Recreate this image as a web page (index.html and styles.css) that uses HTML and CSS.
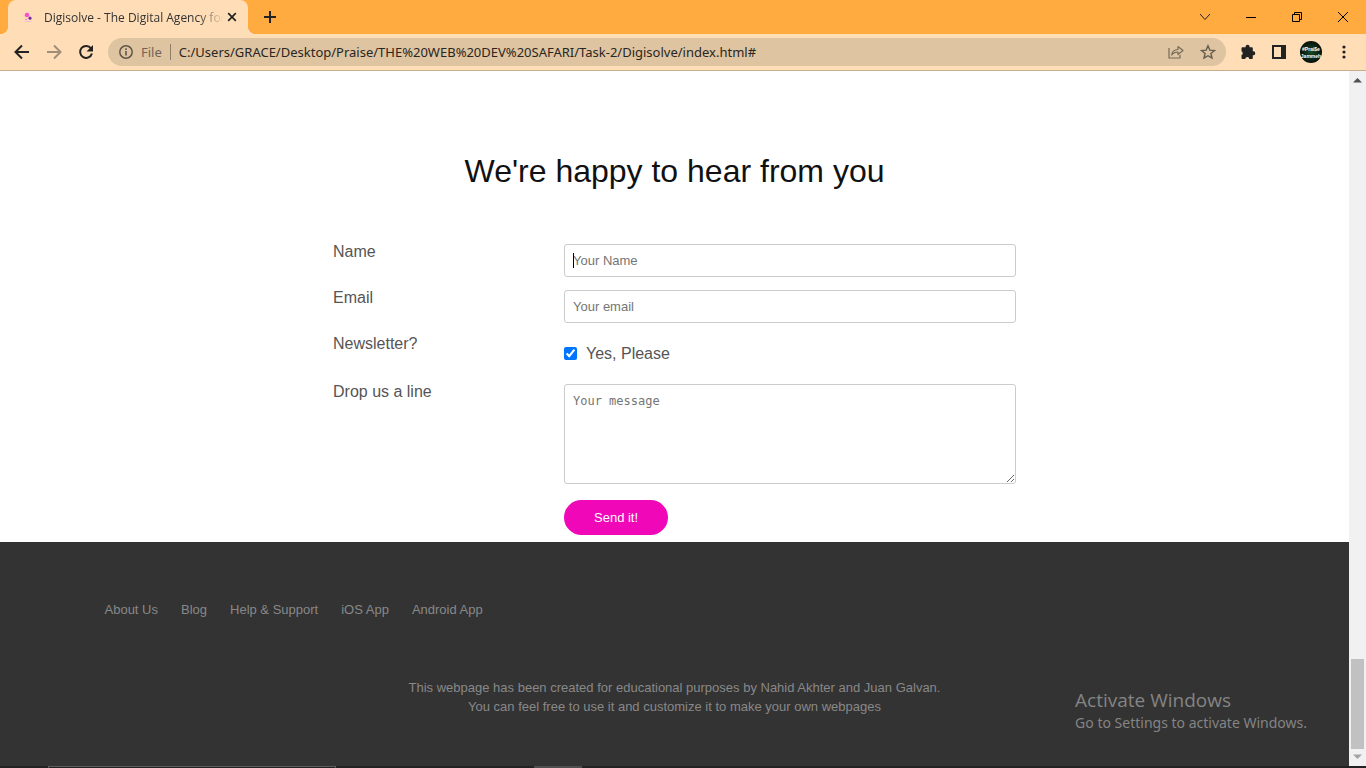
FILE: index.html
```html
<!DOCTYPE html>
<html lang="en">
<head>
<meta charset="utf-8">
<meta name="viewport" content="width=device-width, initial-scale=1">
<title>Digisolve - The Digital Agency for</title>
<link rel="stylesheet" href="styles.css">
</head>
<body>
<div class="browser">
  <header class="tab-strip">
    <div class="tab">
      <svg class="favicon" width="16" height="16" viewBox="0 0 16 16" aria-hidden="true">
        <circle cx="7" cy="6" r="2.3" fill="#ff4fd0"/><circle cx="10" cy="9.2" r="1.6" fill="#7b2f9c"/><path d="M5 10.500h2" stroke="#d58be0"/><path d="M4.500 12.500h7" stroke="#f0bfd4"/>
      </svg>
      <span class="tab-title">Digisolve - The Digital Agency for</span>
      <button class="icon-button tab-close" type="button" aria-label="Close tab">
        <svg width="10" height="10" viewBox="0 0 10 10"><path d="M1.200 1.200l7.600 7.600M8.800 1.200L1.200 8.800" stroke="#222" stroke-width="1.700"/></svg>
      </button>
    </div>
    <button class="icon-button new-tab" type="button" aria-label="New tab">
      <svg width="12" height="12" viewBox="0 0 12 12"><path d="M6 0v12M0 6h12" stroke="#222" stroke-width="2"/></svg>
    </button>
    <div class="window-controls">
      <button class="icon-button" type="button" aria-label="Search tabs"><svg width="12" height="12" viewBox="0 0 12 12"><path d="M1 3l5 5.500L11 3" fill="none" stroke="#222"/></svg></button>
      <button class="icon-button" type="button" aria-label="Minimize"><svg width="10" height="10" viewBox="0 0 10 10"><path d="M0 5.500h10" stroke="#000"/></svg></button>
      <button class="icon-button" type="button" aria-label="Restore"><svg width="10" height="10" viewBox="0 0 10 10"><path d="M.5 2.500h7v7h-7zM2.500 2.500v-2h7v7h-2" fill="none" stroke="#000"/></svg></button>
      <button class="icon-button" type="button" aria-label="Close"><svg width="10" height="10" viewBox="0 0 10 10"><path d="M0 0l10 10M10 0L0 10" stroke="#000"/></svg></button>
    </div>
  </header>

  <nav class="toolbar" aria-label="Browser toolbar">
    <button class="icon-button" type="button" aria-label="Back"><svg width="16" height="16" viewBox="0 0 16 16"><path d="M15 8H2M8 1.500L1.500 8 8 14.500" fill="none" stroke="#222" stroke-width="2"/></svg></button>
    <button class="icon-button" type="button" aria-label="Forward"><svg width="16" height="16" viewBox="0 0 16 16"><path d="M1 8h13M8 1.500L14.500 8 8 14.500" fill="none" stroke="#a18d78" stroke-width="2"/></svg></button>
    <button class="icon-button" type="button" aria-label="Reload"><svg width="16" height="16" viewBox="0 0 16 16"><path d="M13 4.400A6 6 0 1 0 13.900 9.500" fill="none" stroke="#222" stroke-width="2"/><path d="M15 1v6.500H8.500z" fill="#222"/></svg></button>
    <div class="address-bar">
      <svg width="14" height="14" viewBox="0 0 14 14" aria-hidden="true"><circle cx="7" cy="7" r="6.200" fill="none" stroke="#5f5648" stroke-width="1.500"/><path d="M7 6v4.500M7 3.300v1.600" stroke="#5f5648" stroke-width="1.600"/></svg>
      <span class="scheme">File</span>
      <input class="url" type="text" aria-label="Address" value="C:/Users/GRACE/Desktop/Praise/THE%20WEB%20DEV%20SAFARI/Task-2/Digisolve/index.html#">
      <button class="icon-button share" type="button" aria-label="Share"><svg width="16" height="14" viewBox="0 0 16 14"><path d="M1 3v10h11v-3M3.800 10C4 6.500 6 4.700 10 4.500V1.500L15 5.500 10 9.500V7C7 7 5.200 7.800 3.800 10z" fill="none" stroke="#756a5b" stroke-width="1.200" stroke-linejoin="round"/></svg></button>
      <button class="icon-button" type="button" aria-label="Bookmark"><svg width="16" height="16" viewBox="0 0 16 16"><path d="M8 1.800l1.800 4.300 4.700.4-3.600 3 1.100 4.600L8 11.700l-4 2.400 1.100-4.600-3.600-3 4.700-.4z" fill="none" stroke="#655c50" stroke-width="1.400"/></svg></button>
    </div>
    <div class="actions">
      <button class="icon-button extensions" type="button" aria-label="Extensions"><svg width="16" height="16" viewBox="0 0 16 16"><path d="M1.500 4.300q0-1 1-1h3.200a2 2 0 1 1 3.800 0h2.300q1 0 1 1v3a2 2 0 1 1 0 3.900v3q0 .8-1 .8H9.300a2 2 0 0 0-4 0H2.500q-1 0-1-1v-3a2 2 0 0 0 0-3.700z" fill="#222"/></svg></button>
      <button class="icon-button" type="button" aria-label="Side panel"><svg width="14" height="14" viewBox="0 0 14 14"><path d="M1 1h12v12H1z" fill="none" stroke="#222" stroke-width="2"/><path d="M9 1h4v12H9z" fill="#222"/></svg></button>
      <button class="icon-button" type="button" aria-label="Profile"><svg width="22" height="22" viewBox="0 0 22 22"><defs><radialGradient id="avatar"><stop offset="0" stop-color="#174a28"/><stop offset="1" stop-color="#071009"/></radialGradient></defs><circle cx="11" cy="11" r="11" fill="url(#avatar)"/><g class="avatar-text"><text x="11" y="10">#Prai$e</text><text x="11" y="17">Jammeh</text></g></svg></button>
      <button class="icon-button" type="button" aria-label="Menu"><svg width="16" height="16" viewBox="0 0 16 16" fill="#222"><circle cx="8" cy="3" r="1.600"/><circle cx="8" cy="8" r="1.600"/><circle cx="8" cy="13" r="1.600"/></svg></button>
    </div>
  </nav>

  <div class="viewport">
    <div class="page">
      <main class="contact">
        <h1>We're happy to hear from you</h1>
        <form class="contact-form">
          <label for="name">Name</label>
          <div class="field text-field focused"><input class="text-box" id="name" type="text" placeholder="Your Name"></div>
          <label for="email">Email</label>
          <div class="field text-field"><input class="text-box" id="email" type="email" placeholder="Your email"></div>
          <span class="form-label">Newsletter?</span>
          <div class="field choice"><input id="news" type="checkbox" checked><label for="news">Yes, Please</label></div>
          <label for="message">Drop us a line</label>
          <div class="field"><textarea class="text-box" id="message" placeholder="Your message"></textarea></div>
          <div class="field submit-row"><button class="send" type="button">Send it!</button></div>
        </form>
      </main>
      <footer class="site-footer">
        <ul class="footer-nav">
          <li><a href="#">About Us</a></li>
          <li><a href="#">Blog</a></li>
          <li><a href="#">Help &amp; Support</a></li>
          <li><a href="#">iOS App</a></li>
          <li><a href="#">Android App</a></li>
        </ul>
        <p>This webpage has been created for educational purposes by Nahid Akhter and Juan Galvan.<br>You can feel free to use it and customize it to make your own webpages</p>
      </footer>
      <aside class="watermark"><strong>Activate Windows</strong><span>Go to Settings to activate Windows.</span></aside>
    </div>
    <div class="scrollbar" aria-hidden="true">
      <svg width="9" height="5" viewBox="0 0 9 5"><path d="M0 4.500L4.500 0 9 4.500z" fill="#505050"/></svg>
      <div class="thumb"></div>
      <svg width="9" height="5" viewBox="0 0 9 5"><path d="M0 .5L4.500 5 9 .5z" fill="#a3a3a3"/></svg>
    </div>
  </div>
  <div class="taskbar" aria-hidden="true"><div class="search-edge"></div><div class="active-app"></div></div>
</div>
</body>
</html>
```
FILE: styles.css
```css
* {
  box-sizing: border-box;
}

body {
  margin: 0;
  font-family: "Liberation Sans", Arial, sans-serif;
  font-size: 16px;
  color: #555;
  background: #fff;
}

.browser {
  display: flex;
  flex-direction: column;
  min-height: 100vh;
}

.icon-button {
  display: flex;
  flex: none;
  align-items: center;
  justify-content: center;
  padding: 0;
  border: 0;
  background: none;
}

/* Tabs */
.tab-strip {
  display: flex;
  align-items: center;
  height: 34px;
  padding-left: 8px;
  background: #ffab40;
  font-family: "Open Sans", "Noto Sans", sans-serif;
  font-size: 12px;
}

.tab {
  position: relative;
  display: flex;
  align-items: center;
  width: 240px;
  height: 34px;
  padding: 0 11px 0 12px;
  border-radius: 8px 8px 0 0;
  background: #ffdeb7;
  color: #333;
}

.tab::before,
.tab::after {
  content: "";
  position: absolute;
  bottom: 0;
  width: 8px;
  height: 8px;
}

.tab::before {
  left: -8px;
  background: radial-gradient(circle at 0 0, transparent 8px, #ffdeb7 8px);
}

.tab::after {
  right: -8px;
  background: radial-gradient(circle at 100% 0, transparent 8px, #ffdeb7 8px);
}

.favicon {
  flex: none;
  margin-right: 8px;
}

.tab-title {
  flex: 1;
  overflow: hidden;
  white-space: nowrap;
  mask-image: linear-gradient(to right, #000 84%, transparent 98%);
}

.new-tab {
  margin-left: 16px;
}

.window-controls {
  display: flex;
  height: 28px;
  margin-left: auto;
}

.window-controls .icon-button {
  width: 46px;
}

/* Toolbar */
.toolbar {
  display: flex;
  align-items: center;
  gap: 16px;
  height: 37px;
  padding: 0 14px;
  border-bottom: 1px solid #c9ae8e;
  background: #ffdeb7;
  font-family: "Noto Sans", "Open Sans", sans-serif;
  font-size: 13px;
}

.address-bar {
  display: flex;
  flex: 1;
  align-items: center;
  min-width: 0;
  height: 28px;
  margin-left: -2px;
  padding: 0 10px 0 11px;
  border-radius: 14px;
  background: #dfc4a1;
}

.scheme {
  margin: 0 8px;
  color: #6f6455;
}

.url {
  flex: 1;
  min-width: 0;
  padding: 0 8px;
  border: 0;
  border-left: 1px solid #8d7d69;
  background: none;
  color: #2a2622;
  font: inherit;
  line-height: 16px;
}

.share {
  margin-right: 16px;
}

.actions {
  display: flex;
  align-items: center;
  gap: 14px;
  margin-left: -2px;
}

.extensions {
  margin-right: 2px;
}

.avatar-text {
  fill: #fff;
  font: bold 5px "Liberation Sans", sans-serif;
  text-anchor: middle;
}

/* Page area */
.viewport {
  display: flex;
  flex: 1;
}

.page {
  position: relative;
  display: flex;
  flex: 1;
  flex-direction: column;
  min-width: 0;
}

.contact {
  padding: 80px 24px 7px;
}

h1 {
  margin: 0 0 53px;
  color: #111;
  font-size: 32px;
  font-weight: 400;
  line-height: 40px;
  text-align: center;
}

.contact-form {
  display: grid;
  grid-template-columns: 231px 1fr;
  row-gap: 13px;
  max-width: 683px;
  margin: 0 auto;
}

.contact-form > label,
.form-label {
  line-height: 16px;
}

.field {
  grid-column: 2;
  position: relative;
}

.text-box {
  display: block;
  width: 100%;
  padding: 8px;
  border: 1px solid #ccc;
  border-radius: 3px;
  outline: 0;
  background: #fff;
  font-family: "Liberation Sans", Arial, sans-serif;
  font-size: 13px;
  line-height: 15px;
}

.text-box::placeholder {
  color: #757575;
}

.focused::after {
  content: "";
  position: absolute;
  top: 9px;
  left: 9px;
  width: 1px;
  height: 15px;
  background: #000;
}

textarea.text-box {
  height: 100px;
  font-family: "DejaVu Sans Mono", monospace;
  font-size: 12px;
  line-height: 17px;
}

.choice {
  display: flex;
  align-items: center;
  gap: 9px;
  height: 35px;
}

.choice input {
  width: 13px;
  height: 13px;
  margin: 0;
  accent-color: #0075ff;
}

.submit-row {
  padding-top: 3px;
}

.send {
  display: block;
  padding: 10px 30px;
  border: 0;
  border-radius: 18px;
  background: #f007b7;
  color: #fff;
  font-family: "Liberation Sans", Arial, sans-serif;
  font-size: 13px;
  line-height: 15px;
}

/* Footer */
.site-footer {
  flex: 1;
  padding: 58px 24px 48px;
  background: #333;
  color: #888;
  font-size: 13px;
  line-height: 19px;
}

.footer-nav {
  display: flex;
  gap: 23px;
  max-width: 1140px;
  margin: 0 auto 59px;
  padding: 0;
  list-style: none;
}

.footer-nav a {
  color: inherit;
  text-decoration: none;
}

.site-footer p {
  margin: 0;
  text-align: center;
}

.watermark {
  position: absolute;
  right: 42px;
  bottom: 33px;
  display: flex;
  flex-direction: column;
  color: #848484;
  font-family: "Noto Sans", "Open Sans", sans-serif;
  font-size: 14px;
  line-height: 20px;
}

.watermark strong {
  font-family: "Open Sans", "Noto Sans", sans-serif;
  font-size: 19px;
  font-weight: 400;
  line-height: 26px;
}

.scrollbar {
  display: flex;
  flex-direction: column;
  align-items: center;
  width: 17px;
  padding: 7px 0;
  background: #f1f1f1;
}

.thumb {
  width: 13px;
  height: 90px;
  margin-top: auto;
  margin-bottom: 5px;
  background: #c1c1c1;
}

.taskbar {
  display: flex;
  height: 2px;
  padding-left: 48px;
  background: #242122;
}

.search-edge {
  width: 288px;
  border: 1px solid #5e5e5e;
  border-bottom: 0;
}

.active-app {
  width: 48px;
  margin-left: 198px;
  background: #4f4f4f;
}
```
